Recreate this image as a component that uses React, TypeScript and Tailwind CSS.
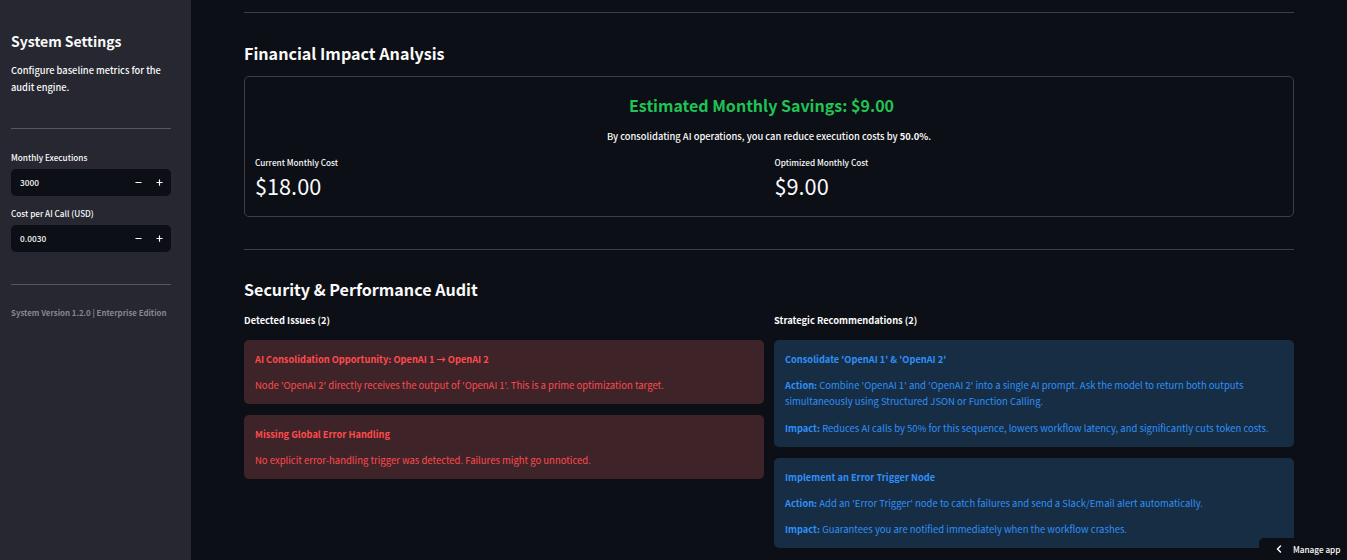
import { ChevronLeft, Minus, Plus } from "lucide-react";

const font = { fontFamily: '"Noto Sans CJK SC", "Noto Sans", sans-serif' };

function NumberField({ label, value }: { label: string; value: string }) {
  return (
    <div>
      <div className="text-[8.2px] leading-[14px] font-medium text-[#fafafa]">{label}</div>
      <div className="mt-[5px] flex h-[27px] items-center justify-between rounded-[5px] bg-[#0c0f15] pl-[9px] pr-[7.5px] text-[8.3px] font-medium text-[#fafafa]">
        <span>{value}</span>
        <div className="flex items-center gap-[12px]">
          <Minus size={9} strokeWidth={3} />
          <Plus size={9} strokeWidth={3} />
        </div>
      </div>
    </div>
  );
}

function Note({ tone, children }: { tone: "red" | "blue"; children: React.ReactNode }) {
  const cls =
    tone === "red"
      ? "bg-[#3e2329] text-[#ff4b4b]"
      : "bg-[#172d43] text-[#2e90fa]";
  return <div className={`rounded-[5px] px-[11px] py-[11px] text-[9.5px] leading-[16px] ${cls}`}>{children}</div>;
}

function NoteTitle({ children }: { children: React.ReactNode }) {
  return <div className="text-[9.25px] font-semibold">{children}</div>;
}

function Lead({ children }: { children: React.ReactNode }) {
  return <b className="text-[9.25px] font-semibold">{children}</b>;
}

export default function App() {
  return (
    <div style={font} className="flex h-[560px] w-[1347px] overflow-hidden bg-[#0c0f15] text-[#fafafa]">
      <aside className="w-[191px] shrink-0 bg-[#262730] pl-[11px] pr-[20px] pt-[31px]">
        <h2 className="text-[14px] leading-[20px] font-semibold">System Settings</h2>
        <p className="mt-[11px] text-[9.3px] leading-[17px] font-medium">
          Configure baseline metrics for the audit engine.
        </p>
        <hr className="mt-[32px] border-[#55565e]" />
        <div className="mt-[21px] flex flex-col gap-[10px]">
          <NumberField label="Monthly Executions" value="3000" />
          <NumberField label="Cost per AI Call (USD)" value="0.0030" />
        </div>
        <hr className="mt-[32px] border-[#55565e]" />
        <p className="mt-[22px] text-[7.85px] leading-[12px] font-semibold whitespace-nowrap text-[#86878d]">
          System Version 1.2.0 | Enterprise Edition
        </p>
      </aside>

      <main className="flex-1 pl-[53px] pr-[53px] pt-[12px]">
        <hr className="border-[#3d3f47]" />
        <h3 className="mt-[29px] text-[16.1px] leading-[22px] font-semibold">Financial Impact Analysis</h3>
        <section className="mt-[12px] h-[141px] rounded-[5px] border border-[#3d3f47] px-[10px] pt-[16px]">
          <div className="pr-[15px] text-center text-[16px] leading-[24px] font-semibold text-[#21c354]">
            Estimated Monthly Savings: $9.00
          </div>
          <p className="mt-[11px] text-center text-[9.35px] leading-[16px] font-medium">
            By consolidating AI operations, you can reduce execution costs by <b>50.0%</b>.
          </p>
          <div className="mt-[11px] grid grid-cols-2 gap-[11px]">
            <div>
              <div className="text-[8.2px] leading-[14px] font-medium">Current Monthly Cost</div>
              <div className="mt-[1px] text-[21.7px] leading-[32px]">$18.00</div>
            </div>
            <div>
              <div className="text-[8.2px] leading-[14px] font-medium">Optimized Monthly Cost</div>
              <div className="mt-[1px] text-[21.7px] leading-[32px]">$9.00</div>
            </div>
          </div>
        </section>
        <hr className="mt-[32px] border-[#3d3f47]" />
        <h3 className="mt-[28px] text-[16.1px] leading-[22px] font-semibold">Security &amp; Performance Audit</h3>
        <div className="mt-[13px] grid grid-cols-2 gap-[10px]">
          <div>
            <div className="text-[9.3px] leading-[14px] font-semibold">Detected Issues (2)</div>
            <div className="mt-[13px] flex flex-col gap-[11px]">
              <Note tone="red">
                <NoteTitle>AI Consolidation Opportunity: OpenAI 1 → OpenAI 2</NoteTitle>
                <p className="mt-[10px]">Node 'OpenAI 2' directly receives the output of 'OpenAI 1'. This is a prime optimization target.</p>
              </Note>
              <Note tone="red">
                <NoteTitle>Missing Global Error Handling</NoteTitle>
                <p className="mt-[10px]">No explicit error-handling trigger was detected. Failures might go unnoticed.</p>
              </Note>
            </div>
          </div>
          <div>
            <div className="text-[9.3px] leading-[14px] font-semibold">Strategic Recommendations (2)</div>
            <div className="mt-[13px] flex flex-col gap-[11px]">
              <Note tone="blue">
                <NoteTitle>Consolidate 'OpenAI 1' &amp; 'OpenAI 2'</NoteTitle>
                <p className="mt-[10px]">
                  <Lead>Action:</Lead> Combine 'OpenAI 1' and 'OpenAI 2' into a single AI prompt. Ask the model to return both outputs simultaneously using Structured JSON or Function Calling.
                </p>
                <p className="mt-[11px]">
                  <Lead>Impact:</Lead> Reduces AI calls by 50% for this sequence, lowers workflow latency, and significantly cuts token costs.
                </p>
              </Note>
              <Note tone="blue">
                <NoteTitle>Implement an Error Trigger Node</NoteTitle>
                <p className="mt-[10px]">
                  <Lead>Action:</Lead> Add an 'Error Trigger' node to catch failures and send a Slack/Email alert automatically.
                </p>
                <p className="mt-[10px]">
                  <Lead>Impact:</Lead> Guarantees you are notified immediately when the workflow crashes.
                </p>
              </Note>
            </div>
          </div>
        </div>
      </main>

      <div className="fixed right-0 bottom-0 flex h-[22px] w-[88px] items-center rounded-tl-[5px] bg-[#0c0f15] pl-[14px] text-[8.2px] font-medium whitespace-nowrap text-[#fafafa]">
        <ChevronLeft size={12} strokeWidth={3} />
        <span className="ml-[8px]">Manage app</span>
      </div>
    </div>
  );
}
